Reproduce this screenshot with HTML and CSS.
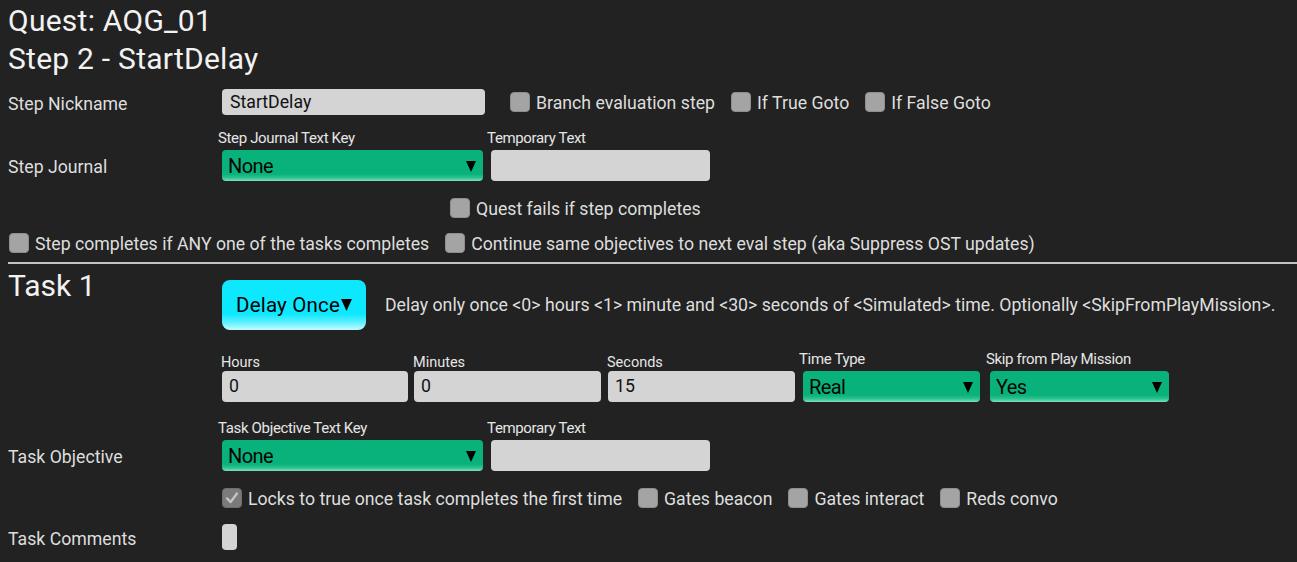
FILE: index.html
```html
<!DOCTYPE html>
<html>
<head>
<meta charset="utf-8">
<link rel="stylesheet" href="styles.css">
</head>
<body>
<div class="page">
  <h1 class="title">Quest: AQG_01</h1>
  <h1 class="title">Step 2 - StartDelay</h1>

  <div class="row row-nick">
    <div class="row-label">Step Nickname</div>
    <div class="input nick">StartDelay</div>
    <div class="checks">
      <span class="check"><span class="box"></span><span class="lbl">Branch evaluation step</span></span>
      <span class="check"><span class="box"></span><span class="lbl">If True Goto</span></span>
      <span class="check"><span class="box"></span><span class="lbl">If False Goto</span></span>
    </div>
  </div>

  <div class="row row-fields row-journal">
    <div class="row-label tall">Step Journal</div>
    <div class="field w-key">
      <div class="cap">Step Journal Text Key</div>
      <div class="dropdown"><span>None</span><svg class="arrow" viewBox="0 0 10 11" width="10" height="11"><path d="M0 0H10L5 11Z"/></svg></div>
    </div>
    <div class="field w-tmp">
      <div class="cap">Temporary Text</div>
      <div class="input tall-input"></div>
    </div>
  </div>

  <div class="row row-fails">
    <span class="check"><span class="box"></span><span class="lbl">Quest fails if step completes</span></span>
  </div>

  <div class="row row-any">
    <div class="checks">
      <span class="check"><span class="box"></span><span class="lbl">Step completes if ANY one of the tasks completes</span></span>
      <span class="check"><span class="box"></span><span class="lbl">Continue same objectives to next eval step (aka Suppress OST updates)</span></span>
    </div>
  </div>

  <div class="divider"></div>

  <div class="row row-task">
    <div class="task-title">Task 1</div>
    <div class="type-btn">Delay Once<svg class="arrow" viewBox="0 0 10 11" width="11" height="12"><path d="M0 0H10L5 11Z"/></svg></div>
    <div class="desc">Delay only once &lt;0&gt; hours &lt;1&gt; minute and &lt;30&gt; seconds of &lt;Simulated&gt; time. Optionally &lt;SkipFromPlayMission&gt;.</div>
  </div>

  <div class="row row-fields row-time">
    <div class="field w-h">
      <div class="cap-n">Hours</div>
      <div class="input tall-input">0</div>
    </div>
    <div class="field w-m">
      <div class="cap-n">Minutes</div>
      <div class="input tall-input">0</div>
    </div>
    <div class="field w-s">
      <div class="cap-n">Seconds</div>
      <div class="input tall-input">15</div>
    </div>
    <div class="field w-tt">
      <div class="cap">Time Type</div>
      <div class="dropdown"><span>Real</span><svg class="arrow" viewBox="0 0 10 11" width="10" height="11"><path d="M0 0H10L5 11Z"/></svg></div>
    </div>
    <div class="field w-skip">
      <div class="cap">Skip from Play Mission</div>
      <div class="dropdown"><span>Yes</span><svg class="arrow" viewBox="0 0 10 11" width="10" height="11"><path d="M0 0H10L5 11Z"/></svg></div>
    </div>
  </div>

  <div class="row row-fields row-objective">
    <div class="row-label tall">Task Objective</div>
    <div class="field w-key">
      <div class="cap">Task Objective Text Key</div>
      <div class="dropdown"><span>None</span><svg class="arrow" viewBox="0 0 10 11" width="10" height="11"><path d="M0 0H10L5 11Z"/></svg></div>
    </div>
    <div class="field w-tmp">
      <div class="cap">Temporary Text</div>
      <div class="input tall-input"></div>
    </div>
  </div>

  <div class="row row-locks">
    <div class="checks">
      <span class="check"><span class="box checked"><svg viewBox="0 0 20 20" width="20" height="20"><path d="M4.5 10.5L8.5 14.5L15.5 5" fill="none" stroke="#c4c4c4" stroke-width="2.6" stroke-linecap="round" stroke-linejoin="round"/></svg></span><span class="lbl">Locks to true once task completes the first time</span></span>
      <span class="check"><span class="box"></span><span class="lbl">Gates beacon</span></span>
      <span class="check"><span class="box"></span><span class="lbl">Gates interact</span></span>
      <span class="check"><span class="box"></span><span class="lbl">Reds convo</span></span>
    </div>
  </div>

  <div class="row row-comments">
    <div class="row-label">Task Comments</div>
    <div class="input comment"></div>
  </div>
</div>
</body>
</html>
```

FILE: styles.css
```css
html, body {
  margin: 0;
  padding: 0;
  background: #222222;
}
body {
  font-family: Roboto, "Noto Sans", "Liberation Sans", sans-serif;
  color: #dedede;
  font-size: 17.7px;
  overflow: hidden;
}
.page {
  padding: 2px 0 0 8px;
  width: 1289px;
}
.title {
  margin: 0;
  font-size: 30px;
  line-height: 38px;
  font-weight: 400;
  color: #f2f2f2;
  letter-spacing: 0.25px;
}
.row {
  display: flex;
  align-items: center;
}
.row-label {
  width: 214px;
  flex: none;
  line-height: 20px;
  padding-top: 3px;
}
.row-label.tall {
  align-self: flex-end;
  line-height: 31px;
  padding-top: 0;
  position: relative;
  top: 2px;
}
.input {
  background: #d4d4d4;
  border-radius: 4px;
  color: #111;
  box-sizing: border-box;
  padding-left: 7px;
}
.nick {
  width: 263px;
  height: 26px;
  line-height: 26px;
  padding-left: 8px;
}
.tall-input {
  height: 31px;
  line-height: 31px;
}
.checks {
  display: flex;
  gap: 16px;
}
.row-nick .checks {
  margin-left: 25px;
}
.check {
  display: flex;
  align-items: center;
  gap: 6px;
  line-height: 20px;
  white-space: nowrap;
}
.lbl {
  position: relative;
  top: 1px;
}
.box {
  width: 20px;
  height: 20px;
  box-sizing: border-box;
  border-radius: 4px;
  background: #a4a4a4;
  border: 1px solid #8e8e8e;
  flex: none;
  display: flex;
  align-items: center;
  justify-content: center;
}
.box.checked {
  background: #7b7b7b;
  border-color: #6e6e6e;
}
.box.checked svg {
  display: block;
}
.row-nick {
  margin-top: 11px;
}
.row-nick .row-label {
  padding-top: 4px;
}
.row-fields {
  align-items: flex-end;
}
.field {
  display: flex;
  flex-direction: column;
  flex: none;
}
.cap {
  font-size: 15px;
  line-height: 18px;
  margin-bottom: 3px;
  margin-left: -4px;
  letter-spacing: -0.35px;
  color: #e6e6e6;
  white-space: nowrap;
}
.cap-n {
  font-size: 14.5px;
  line-height: 17px;
  margin-left: -1px;
  color: #e6e6e6;
}
.dropdown {
  height: 31px;
  box-sizing: border-box;
  border-radius: 4px;
  background: linear-gradient(to bottom, #0ab27b 0%, #0ab27b 78%, #2fc38f 90%, #7ee2bd 100%);
  color: #050505;
  display: flex;
  align-items: center;
  justify-content: space-between;
  padding: 1px 7px 0 6px;
  font-size: 20px;
  letter-spacing: -0.6px;
}
.arrow {
  display: block;
  fill: #000;
}
.w-key { width: 261px; }
.w-tmp { width: 219px; margin-left: 8px; }
.row-journal { margin-top: 14px; }
.row-fails {
  margin-top: 17px;
  padding-left: 442px;
}
.row-any { margin-top: 15px; }
.row-any .checks { margin-left: 1px; }
.divider {
  margin-top: 9px;
  height: 2px;
  background: #c4c4c4;
}
.row-task {
  align-items: flex-start;
}
.task-title {
  width: 214px;
  flex: none;
  margin-top: 4px;
  font-size: 30px;
  line-height: 36px;
  color: #f2f2f2;
}
.type-btn {
  margin-top: 16px;
  width: 144px;
  height: 50px;
  box-sizing: border-box;
  border-radius: 8px;
  background: linear-gradient(to bottom, #0de8ff 0%, #0de8ff 68%, #5af0ff 84%, #c4fbff 100%);
  color: #000;
  font-size: 20.5px;
  letter-spacing: 0.2px;
  display: flex;
  align-items: center;
  padding-left: 14px;
  padding-bottom: 1px;
}
.type-btn .arrow {
  margin-left: 1px;
}
.desc {
  margin-top: 16px;
  margin-left: 19px;
  line-height: 50px;
  white-space: nowrap;
}
.row-time { margin-top: 20px; }
.w-h { width: 186px; }
.w-m { width: 187px; margin-left: 6px; }
.w-s { width: 187px; margin-left: 7px; }
.w-tt { width: 177px; margin-left: 8px; }
.w-skip { width: 179px; margin-left: 10px; }
.row-time .field:first-child { margin-left: 214px; }
.row-objective { margin-top: 17px; }
.row-locks { margin-top: 17px; }
.row-locks .checks { margin-left: 214px; }
.row-comments { margin-top: 16px; }
.comment {
  width: 15px;
  height: 26px;
  padding: 0;
  border-radius: 4px;
}
```
